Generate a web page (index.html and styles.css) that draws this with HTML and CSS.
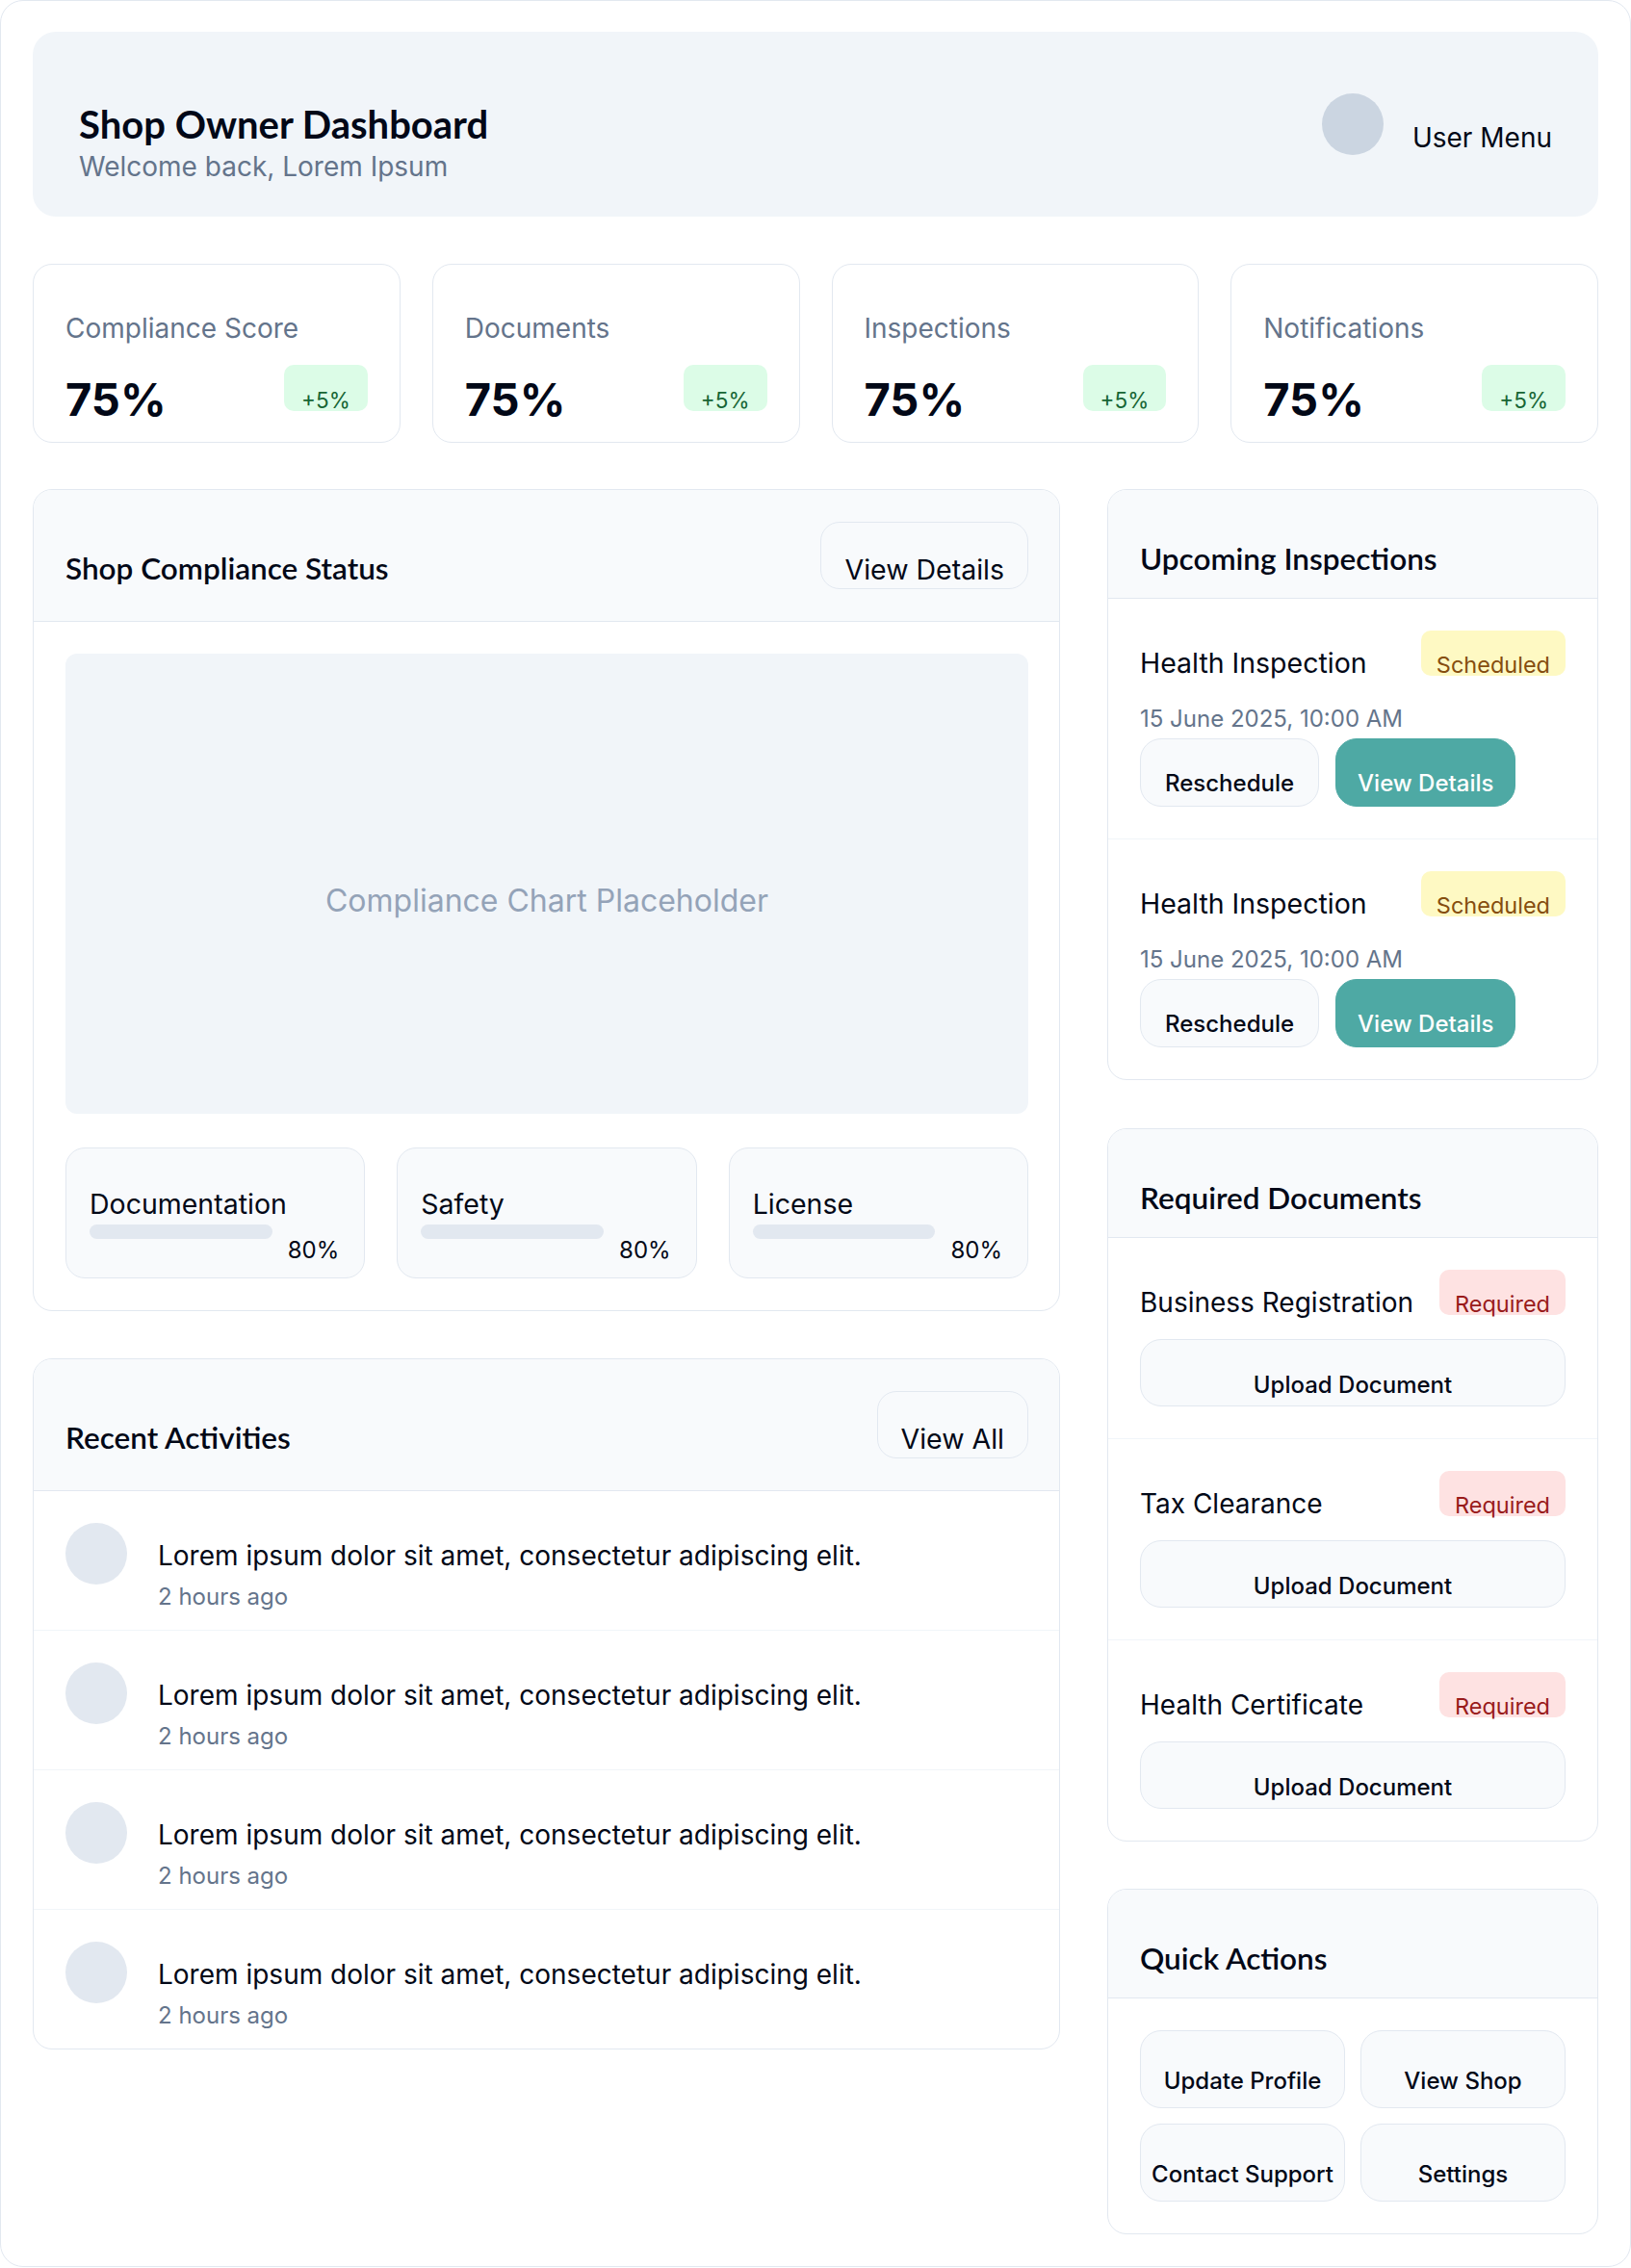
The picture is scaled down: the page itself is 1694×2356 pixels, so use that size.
FILE: index.html
```html
<!DOCTYPE html>
<html lang="en">
<head>
<meta charset="utf-8">
<title>Shop Owner Dashboard</title>
<link rel="stylesheet" href="styles.css">
</head>
<body>
<div class="page">
  <header class="top">
    <div class="top-left">
      <h1 class="top-title">Shop Owner Dashboard</h1>
      <p class="top-sub">Welcome back, Lorem Ipsum</p>
    </div>
    <div class="user">
      <span class="user-avatar"></span>
      <span class="user-name">User Menu</span>
    </div>
  </header>

  <section class="stats">
    <div class="stat">
      <div class="stat-label">Compliance Score</div>
      <div class="stat-row"><span class="stat-value">75%</span><span class="badge badge-green">+5%</span></div>
    </div>
    <div class="stat">
      <div class="stat-label">Documents</div>
      <div class="stat-row"><span class="stat-value">75%</span><span class="badge badge-green">+5%</span></div>
    </div>
    <div class="stat">
      <div class="stat-label">Inspections</div>
      <div class="stat-row"><span class="stat-value">75%</span><span class="badge badge-green">+5%</span></div>
    </div>
    <div class="stat">
      <div class="stat-label">Notifications</div>
      <div class="stat-row"><span class="stat-value">75%</span><span class="badge badge-green">+5%</span></div>
    </div>
  </section>

  <div class="main">
    <div class="col">
      <section class="card">
        <div class="card-head card-head-btn">
          <h2 class="card-title card-title-btn">Shop Compliance Status</h2>
          <button class="btn-outline">View Details</button>
        </div>
        <div class="compliance-body">
          <div class="chart"><span class="chart-text">Compliance Chart Placeholder</span></div>
          <div class="breakdown">
            <div class="bd">
              <div class="bd-label">Documentation</div>
              <div class="bd-row"><span class="bd-track"></span><span class="bd-pct">80%</span></div>
            </div>
            <div class="bd">
              <div class="bd-label">Safety</div>
              <div class="bd-row"><span class="bd-track"></span><span class="bd-pct">80%</span></div>
            </div>
            <div class="bd">
              <div class="bd-label">License</div>
              <div class="bd-row"><span class="bd-track"></span><span class="bd-pct">80%</span></div>
            </div>
          </div>
        </div>
      </section>

      <section class="card">
        <div class="card-head card-head-btn">
          <h2 class="card-title card-title-btn">Recent Activities</h2>
          <button class="btn-outline">View All</button>
        </div>
        <div class="activity">
          <span class="act-avatar"></span>
          <div class="act-text"><div class="act-main">Lorem ipsum dolor sit amet, consectetur adipiscing elit.</div><div class="act-time">2 hours ago</div></div>
        </div>
        <div class="activity">
          <span class="act-avatar"></span>
          <div class="act-text"><div class="act-main">Lorem ipsum dolor sit amet, consectetur adipiscing elit.</div><div class="act-time">2 hours ago</div></div>
        </div>
        <div class="activity">
          <span class="act-avatar"></span>
          <div class="act-text"><div class="act-main">Lorem ipsum dolor sit amet, consectetur adipiscing elit.</div><div class="act-time">2 hours ago</div></div>
        </div>
        <div class="activity">
          <span class="act-avatar"></span>
          <div class="act-text"><div class="act-main">Lorem ipsum dolor sit amet, consectetur adipiscing elit.</div><div class="act-time">2 hours ago</div></div>
        </div>
      </section>
    </div>

    <div class="col col-right">
      <section class="card">
        <div class="card-head">
          <h2 class="card-title">Upcoming Inspections</h2>
        </div>
        <div class="item">
          <div class="item-row"><span class="item-title">Health Inspection</span><span class="badge badge-yellow">Scheduled</span></div>
          <div class="item-date">15 June 2025, 10:00 AM</div>
          <div class="item-actions"><button class="btn-sm">Reschedule</button><button class="btn-sm btn-teal">View Details</button></div>
        </div>
        <div class="item">
          <div class="item-row"><span class="item-title">Health Inspection</span><span class="badge badge-yellow">Scheduled</span></div>
          <div class="item-date">15 June 2025, 10:00 AM</div>
          <div class="item-actions"><button class="btn-sm">Reschedule</button><button class="btn-sm btn-teal">View Details</button></div>
        </div>
      </section>

      <section class="card">
        <div class="card-head">
          <h2 class="card-title">Required Documents</h2>
        </div>
        <div class="item doc">
          <div class="item-row"><span class="item-title doc-title">Business Registration</span><span class="badge badge-red">Required</span></div>
          <button class="btn-upload">Upload Document</button>
        </div>
        <div class="item doc">
          <div class="item-row"><span class="item-title doc-title">Tax Clearance</span><span class="badge badge-red">Required</span></div>
          <button class="btn-upload">Upload Document</button>
        </div>
        <div class="item doc">
          <div class="item-row"><span class="item-title doc-title">Health Certificate</span><span class="badge badge-red">Required</span></div>
          <button class="btn-upload">Upload Document</button>
        </div>
      </section>

      <section class="card">
        <div class="card-head">
          <h2 class="card-title">Quick Actions</h2>
        </div>
        <div class="quick">
          <button class="btn-quick">Update Profile</button>
          <button class="btn-quick">View Shop</button>
          <button class="btn-quick">Contact Support</button>
          <button class="btn-quick">Settings</button>
        </div>
      </section>
    </div>
  </div>
</div>
</body>
</html>
```

FILE: styles.css
```css
* { box-sizing: border-box; }

body {
  margin: 0;
  font-family: Inter, "Liberation Sans", sans-serif;
  color: #0f172a;
  background: #ffffff;
}

button {
  font-family: Inter, "Liberation Sans", sans-serif;
  cursor: pointer;
}

.page {
  border: 1px solid #e2e8f0;
  border-radius: 24px;
  padding: 32px 33px 33px;
  display: flex;
  flex-direction: column;
  gap: 49px;
}

/* Top header */
.top {
  height: 192px;
  background: #f1f5f9;
  border-radius: 24px;
  padding: 0 48px;
  display: flex;
  align-items: center;
  justify-content: space-between;
}

.top-left { margin-top: 39px; }

.top-title {
  margin: 0;
  font-family: Lato, "Noto Sans", sans-serif;
  font-weight: 700;
  font-size: 40px;
  line-height: 48px;
  color: #020817;
}

.top-sub {
  margin: 0;
  font-size: 28px;
  line-height: 40px;
  color: #64748b;
}

.user {
  display: flex;
  align-items: center;
  gap: 30px;
}

.user-avatar {
  width: 64px;
  height: 64px;
  border-radius: 50%;
  background: #cbd5e1;
}

.user-name {
  padding-top: 28px;
  font-size: 28px;
  line-height: 42px;
  color: #020817;
}

/* Stats */
.stats {
  display: grid;
  grid-template-columns: repeat(4, 1fr);
  gap: 33px;
  margin-bottom: -1px;
}

.stat {
  border: 1px solid #e2e8f0;
  border-radius: 20px;
  padding: 46px 33px 19px;
  height: 186px;
}

.stat-label {
  font-size: 28px;
  line-height: 40px;
  color: #64748b;
}

.stat-row {
  margin-top: 18px;
  display: flex;
  justify-content: space-between;
  align-items: flex-start;
}

.stat-value {
  margin-top: 12px;
  font-size: 47px;
  line-height: 47px;
  font-weight: 700;
  color: #020817;
}

.badge {
  display: inline-block;
  height: 47px;
  padding: 24px 16px 0;
  font-size: 23.5px;
  line-height: 23px;
  border-radius: 10px;
  white-space: nowrap;
}

.badge-green {
  height: 48px;
  padding: 25px 18px 0;
  font-size: 22.5px;
  background: #dcfce7;
  color: #166534;
}

.badge-yellow { background: #fef9c3; color: #854d0e; }
.badge-red { background: #fee2e2; color: #991b1b; }

/* Main grid */
.main {
  display: grid;
  grid-template-columns: 1fr 510px;
  gap: 49px;
  align-items: start;
}

.col {
  display: flex;
  flex-direction: column;
  gap: 49px;
}

.col-right { gap: 49.5px; }

.card {
  border: 1px solid #e2e8f0;
  border-radius: 20px;
  overflow: hidden;
  background: #ffffff;
}

.card-head {
  background: #f8fafc;
  border-bottom: 1px solid #e2e8f0;
  padding: 48px 33px 18px;
}

.card-head-btn {
  padding: 33px 32px 33px 33px;
  display: flex;
  justify-content: space-between;
  align-items: center;
}

.card-title {
  margin: 0;
  font-family: Lato, "Noto Sans", sans-serif;
  font-weight: 600;
  font-size: 31.5px;
  line-height: 46px;
  color: #020817;
}

.card-title-btn {
  padding-top: 27px;
  line-height: 43px;
}

.btn-outline {
  height: 70px;
  padding: 0 24px 6px;
  display: flex;
  align-items: flex-end;
  background: #f8fafc;
  border: 1px solid #e2e8f0;
  border-radius: 20px;
  font-size: 28.5px;
  line-height: 27px;
  color: #020817;
}

/* Compliance */
.compliance-body { padding: 33px 32px 33px 33px; }

.chart {
  height: 478px;
  background: #f1f5f9;
  border-radius: 12px;
  display: flex;
  align-items: center;
  justify-content: center;
}

.chart-text {
  padding-top: 35px;
  font-size: 32px;
  line-height: 38px;
  color: #94a3b8;
}

.breakdown {
  margin-top: 35px;
  display: grid;
  grid-template-columns: repeat(3, 1fr);
  gap: 33px;
}

.bd {
  background: #f8fafc;
  border: 1px solid #e2e8f0;
  border-radius: 20px;
  padding: 41px 26px 16px 24px;
}

.bd-label {
  font-size: 28.5px;
  line-height: 33px;
  color: #020817;
}

.bd-row {
  margin-top: 5px;
  display: flex;
  align-items: flex-start;
  gap: 16px;
}

.bd-track {
  flex: 1;
  height: 15px;
  border-radius: 8px;
  background: #e2e8f0;
}

.bd-pct {
  padding-top: 15px;
  font-size: 24px;
  line-height: 24px;
  color: #020817;
}

/* Activities */
.activity {
  display: flex;
  align-items: flex-start;
  gap: 32px;
  padding: 33px 33px 16px;
  border-bottom: 1px solid #f1f5f9;
}

.activity:last-child { border-bottom: none; }

.act-avatar {
  flex: none;
  width: 64px;
  height: 64px;
  border-radius: 50%;
  background: #e2e8f0;
}

.act-text { padding-top: 14px; }

.act-main {
  font-size: 28px;
  line-height: 40px;
  color: #020817;
}

.act-time {
  margin-top: 5px;
  font-size: 24px;
  line-height: 36px;
  color: #64748b;
}

/* Right column items */
.item {
  padding: 33px;
  border-bottom: 1px solid #f1f5f9;
}

.item:last-child { border-bottom: none; }

.item-row {
  display: flex;
  justify-content: space-between;
  align-items: flex-end;
}

.item-title {
  font-size: 28.5px;
  line-height: 26px;
  color: #020817;
}

.doc-title { font-size: 28px; }

.item-date {
  padding-top: 27px;
  margin-bottom: 2px;
  font-size: 24px;
  line-height: 36px;
  color: #64748b;
}

.item-actions {
  display: flex;
  gap: 17px;
}

.btn-sm {
  height: 71px;
  padding: 0 25px 11px;
  display: flex;
  align-items: flex-end;
  background: #f8fafc;
  border: 1px solid #e2e8f0;
  border-radius: 22px;
  font-size: 24px;
  line-height: 24px;
  font-weight: 500;
  color: #020817;
}

.btn-teal {
  padding: 0 22px 11px;
  background: #4ea9a4;
  border-color: #4ea9a4;
  color: #ffffff;
}

.doc { padding-bottom: 33px; }

.btn-upload {
  margin-top: 25px;
  width: 100%;
  height: 70px;
  padding: 0 20px 9px;
  display: flex;
  align-items: flex-end;
  justify-content: center;
  background: #f8fafc;
  border: 1px solid #e2e8f0;
  border-radius: 22px;
  font-size: 24px;
  line-height: 24px;
  font-weight: 500;
  color: #020817;
}

/* Quick actions */
.quick {
  padding: 33px;
  display: grid;
  grid-template-columns: 1fr 1fr;
  gap: 16px;
}

.btn-quick {
  height: 81px;
  padding: 0 8px 15px;
  display: flex;
  align-items: flex-end;
  justify-content: center;
  background: #f8fafc;
  border: 1px solid #e2e8f0;
  border-radius: 22px;
  font-size: 24px;
  line-height: 24px;
  font-weight: 500;
  color: #020817;
  white-space: nowrap;
}
```
